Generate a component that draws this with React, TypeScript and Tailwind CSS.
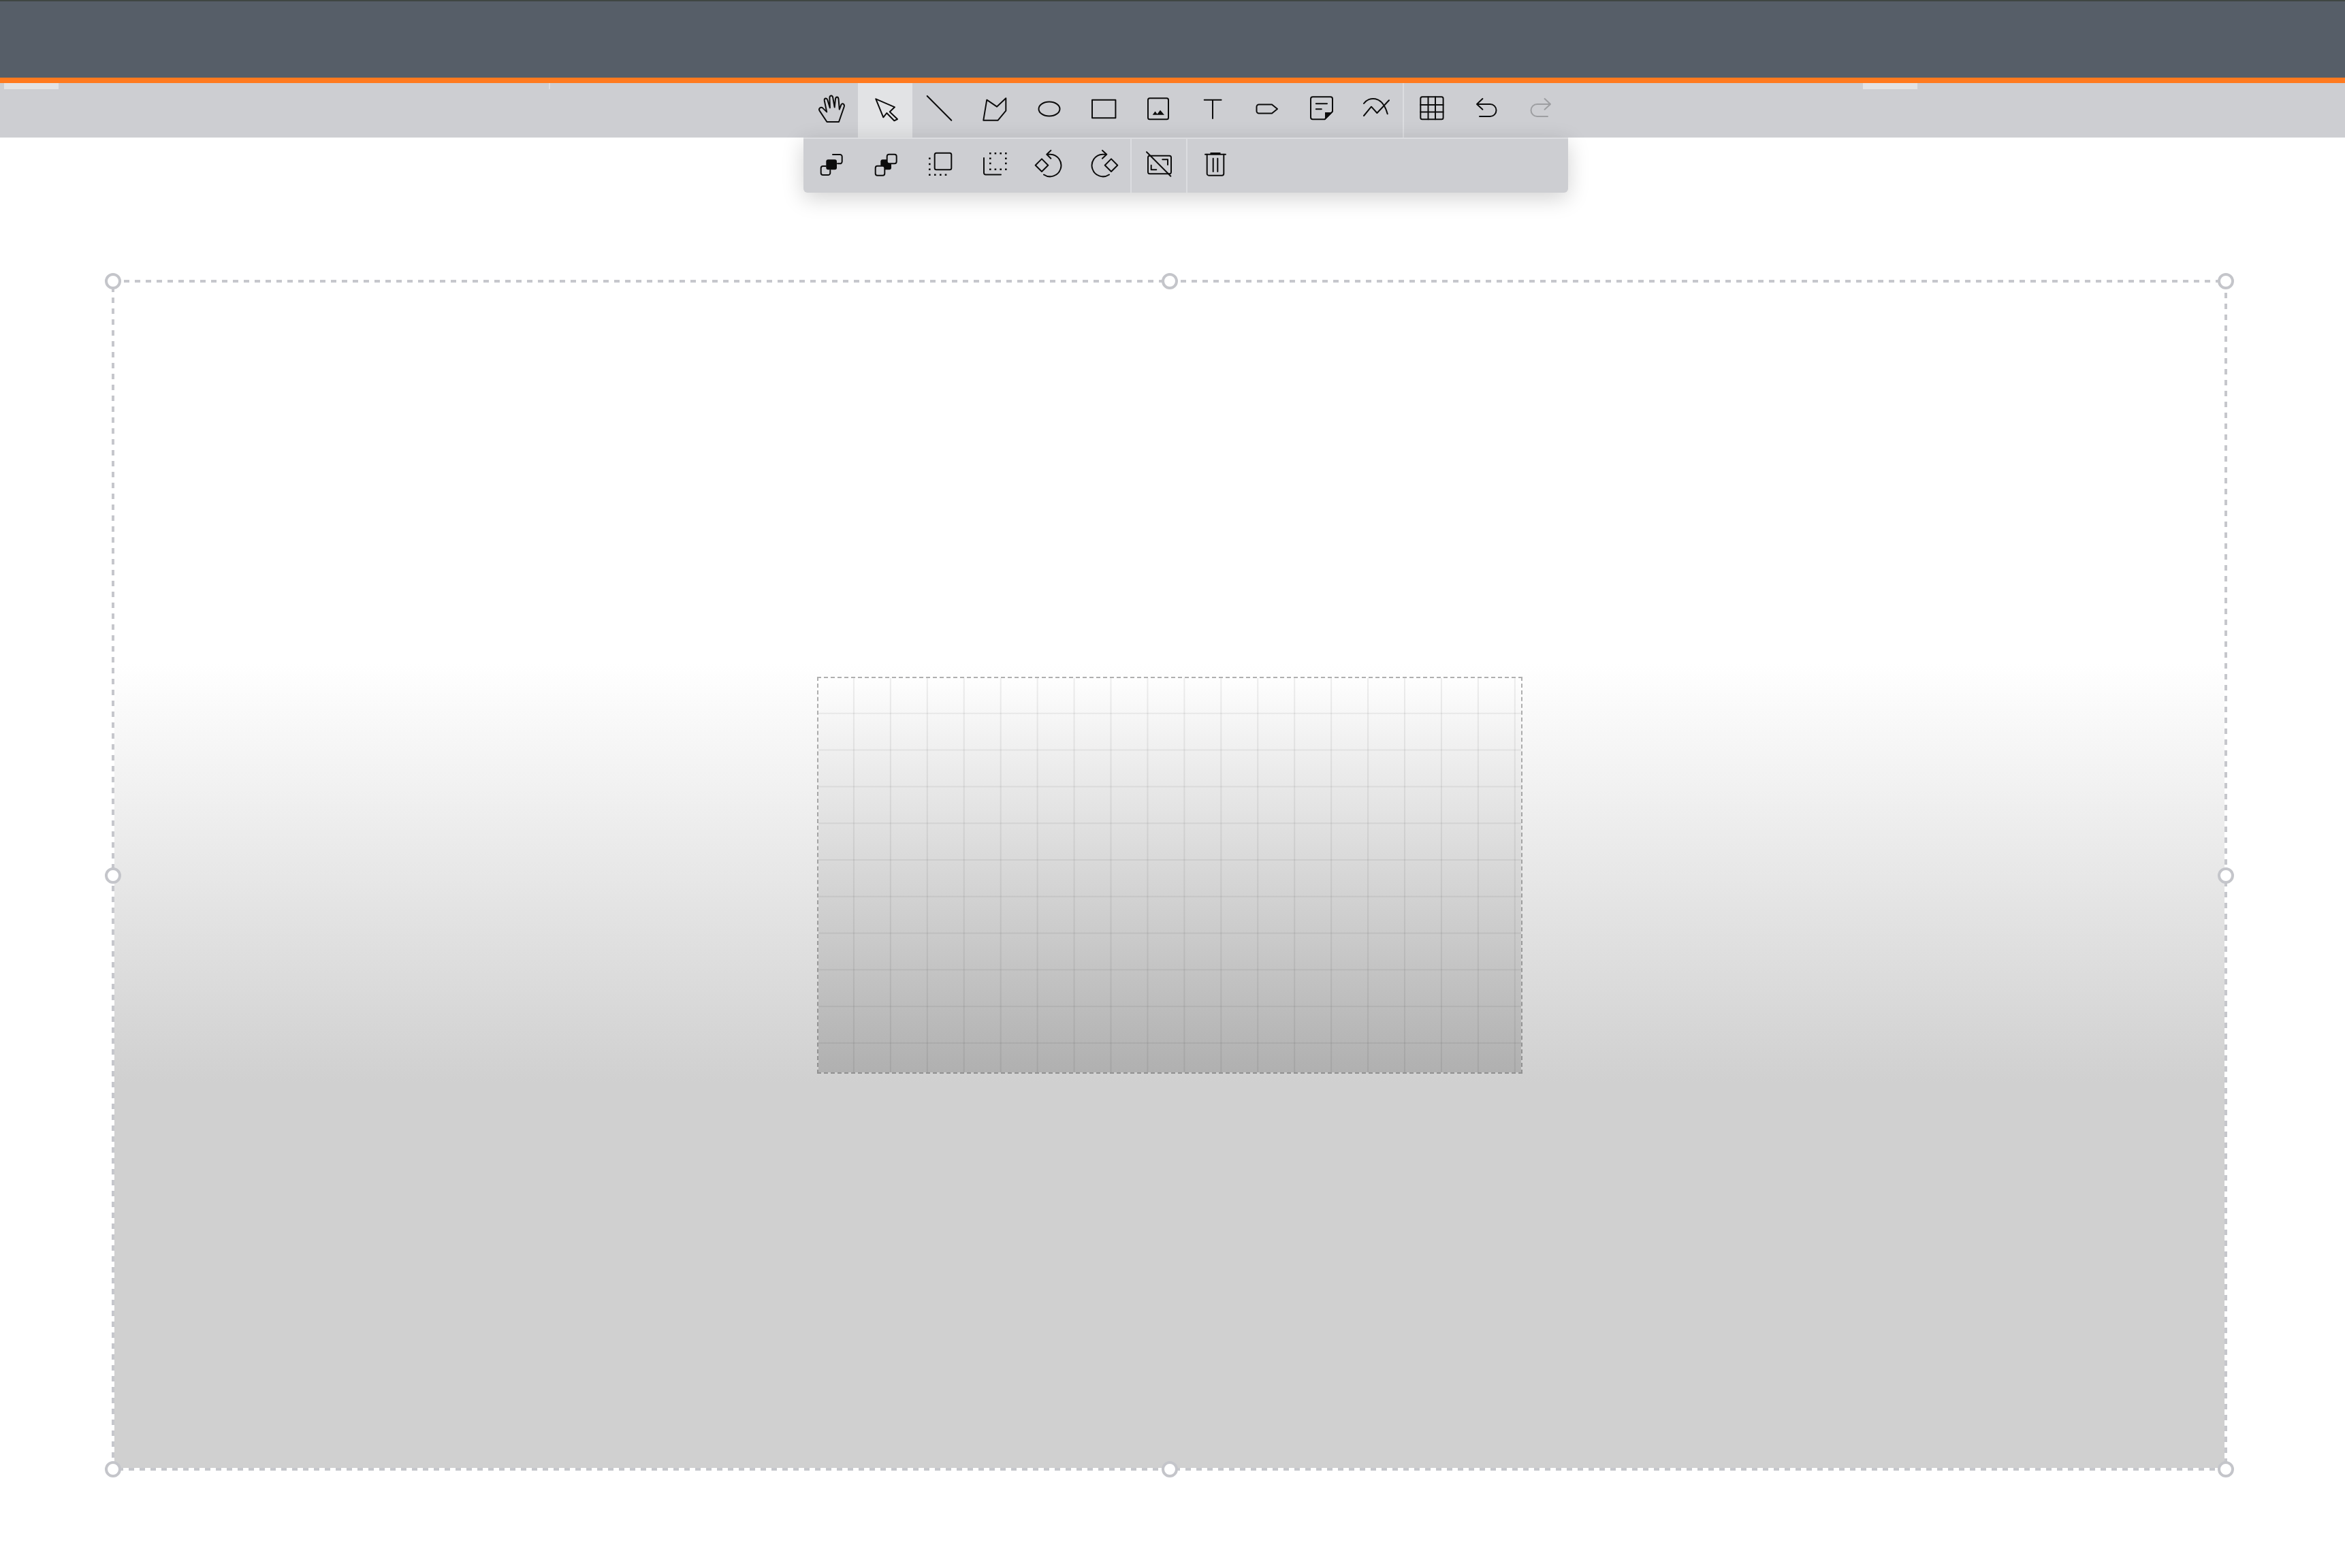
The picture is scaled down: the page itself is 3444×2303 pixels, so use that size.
import React from "react";

const BG = "#cdced2";

function Ico({ children, className = "text-[#0c0c0c]" }: { children: React.ReactNode; className?: string }) {
  return (
    <svg
      viewBox="0 0 80 80"
      width={80}
      height={80}
      fill="none"
      stroke="currentColor"
      strokeWidth={2}
      strokeLinecap="round"
      strokeLinejoin="round"
      className={className}
    >
      {children}
    </svg>
  );
}

const Cell = ({ active, children }: { active?: boolean; children: React.ReactNode }) => (
  <div className={active ? "w-20 h-20 shrink-0 bg-[#e2e3e5]" : "w-20 h-20 shrink-0"}>{children}</div>
);

const Sep = () => <div className="w-[2px] self-stretch shrink-0 bg-[#dcdde0]" />;

function Hand() {
  return (
    <Ico>
      <path
        strokeLinejoin="round"
        d="M34.5 57H52L59.8 34.5C60.6 31 57 28.6 55.4 31.8L52.8 38.6L51.6 24C51.2 19.4 47.4 19.4 46.9 24L45.7 35.6L43.2 21.2C42.4 17.2 38.4 17.8 38.4 21.8L38.9 36.4L35.4 25C34 21 30.2 22.2 30.8 26L34.2 42.4L28.2 36.6C25.6 34.4 21.6 37.4 23.6 40.6Z"
      />
    </Ico>
  );
}

const Pointer = () => (
  <Ico>
    <path d="M26.3 23.3L54 35.3L46.7 42.3L58 53L53.3 55.3L42.3 44L37.3 50.3Z" />
  </Ico>
);
const Line = () => (
  <Ico>
    <path d="M21.7 19L57.3 54.7" />
  </Ico>
);
const Poly = () => (
  <Ico>
    <path d="M24.3 54.7L29.3 24.7L44 34.7L57.3 22.3V40.7L45.7 54.7Z" />
  </Ico>
);
const Ell = () => (
  <Ico>
    <ellipse cx="41" cy="38" rx="15.5" ry="10.5" />
  </Ico>
);
const Rect = () => (
  <Ico>
    <rect x="24" y="24.7" width="34.4" height="26.6" />
  </Ico>
);
const Img = () => (
  <Ico>
    <rect x="26" y="22.3" width="30" height="31" rx="2.5" />
    <path fill="currentColor" stroke="none" d="M32.7 46.7L36.5 41.5L39.6 45.6L44 39.7L50 46.7Z" />
  </Ico>
);
const TextT = () => (
  <Ico>
    <path d="M28.7 24.7H53.6M41 24.7V52" />
  </Ico>
);
const Label = () => (
  <Ico>
    <path d="M29 31.5H48L56 38L48 44.5H29A3.5 3.5 0 0 1 25.5 41V35A3.5 3.5 0 0 1 29 31.5Z" />
  </Ico>
);
const Note = () => (
  <Ico>
    <path d="M45.5 53.3H28A3 3 0 0 1 25 50.3V23.3A3 3 0 0 1 28 20.3H54A3 3 0 0 1 57 23.3V41.8L45.5 53.3" />
    <path fill="currentColor" stroke="none" d="M46 43H57L46 54Z" />
    <path d="M32.8 30.3H49M32.8 38.3H40.8" />
  </Ico>
);
const Curve = () => (
  <Ico>
    <path d="M23 48L34 34.7L42.4 44L60 25.3" />
    <path d="M23 30C30 20 50 17 57.7 45.3" />
  </Ico>
);
const Table = () => (
  <Ico>
    <rect x="24.3" y="20.3" width="33.3" height="33" rx="2.5" />
    <path d="M35.5 20.3V53.3M46 20.3V53.3M24.3 32H57.6M24.3 42.5H57.6" />
  </Ico>
);
const Undo = () => (
  <Ico>
    <path d="M27 31H46.5A9 9 0 0 1 46.5 49H31M35.4 23L27 31L35.4 38.7" />
  </Ico>
);
const Redo = () => (
  <Ico className="text-[#9d9ea1]">
    <path d="M55 31H35.5A9 9 0 0 0 35.5 49H51M46.6 23L55 31L46.6 38.7" />
  </Ico>
);

const Front = () => (
  <Ico>
    <path d="M43 25H53.7A3 3 0 0 1 56.7 28V35.3A3 3 0 0 1 53.7 38.3H50" />
    <path d="M33 42H28.7A3 3 0 0 0 25.7 45V52A3 3 0 0 0 28.7 55H36.3A3 3 0 0 0 39.3 52V48" />
    <rect x="33.3" y="32.3" width="15.7" height="15" rx="3" fill="currentColor" stroke="none" />
  </Ico>
);
const Back = () => (
  <Ico>
    <rect x="33.3" y="32.3" width="15.7" height="15" rx="3" fill="currentColor" stroke="none" />
    <rect x="42.7" y="24.7" width="14" height="13.6" rx="3" fill={BG} />
    <rect x="25.7" y="41.7" width="13.6" height="14" rx="3" fill={BG} />
  </Ico>
);
const Forward = () => (
  <Ico>
    <rect x="32.7" y="22.7" width="24.6" height="24.6" rx="2.5" />
    <path
      strokeWidth={2.6}
      strokeLinecap="butt"
      d="M24 30.7H26.6M24 39H26.6M24 46.7H26.6M24 54.7H26.6M32 54.7H34.6M40 54.7H42.6M47.7 54.7H50.3"
    />
  </Ico>
);
const Backward = () => (
  <Ico>
    <path d="M25 30V52A2.5 2.5 0 0 0 27.5 54.5H50" />
    <path
      strokeWidth={2.6}
      strokeLinecap="butt"
      d="M33 23.3H35.6M40.6 23.3H43.2M48.4 23.3H51M56 23.3H58.6M33 30.7H35.6M33 38H35.6M33 46.7H35.6M56 30.7H58.6M56 38H58.6M56 46.7H58.6M40.6 46.7H43.2M48.4 46.7H51"
    />
  </Ico>
);
const RotL = () => (
  <Ico>
    <path d="M30 31.4L39.3 40.7L30 50L20.7 40.7Z" />
    <path d="M38 24.7H42.7A16.3 16.3 0 1 1 33 54.5M43.3 19L37.3 24.7L43.3 30.7" />
  </Ico>
);
const RotR = () => (
  <Ico>
    <path d="M52 31.4L61.3 40.7L52 50L42.7 40.7Z" />
    <path d="M44.6 24.7H39.3A16.3 16.3 0 1 0 49 54.5M39 19L45.3 24.7L39 30.7" />
  </Ico>
);
const NoAspect = () => (
  <Ico>
    <rect x="24" y="26.7" width="34" height="26.6" rx="2.5" />
    <path d="M22 21.3L57.3 56.7" />
    <path d="M45.3 32.3H53V40M28.7 40.7V47.3H36.3" />
  </Ico>
);
const Trash = () => (
  <Ico>
    <path d="M26 24.7H56M34.3 23H47.7" />
    <path d="M28.7 24.7V53A2.7 2.7 0 0 0 31.4 55.7H50.6A2.7 2.7 0 0 0 53.3 53V24.7" />
    <path d="M37.7 30.7V50M44.3 30.7V50" />
  </Ico>
);

function Handle({ className }: { className: string }) {
  return <div className={"absolute w-6 h-6 rounded-full border-4 border-[#c4c5ca] bg-white " + className} />;
}

export default function App() {
  return (
    <div className="w-[3444px] h-[2303px] overflow-hidden bg-white flex flex-col">
      <header className="h-[122px] shrink-0 bg-[#565e68] border-t-2 border-t-[#3f4643] border-b-[8px] border-b-[#ff7a1f]" />

      <div className="relative z-10 h-20 shrink-0 bg-[#cdced2] flex pl-[1180px]">
        <div className="absolute left-[6px] top-0 w-20 h-[9px] bg-[#e2e3e5]" />
        <div className="absolute left-[806px] top-0 w-[2px] h-[9px] bg-[#dcdde0]" />
        <div className="absolute left-[2736px] top-0 w-20 h-[9px] bg-[#e2e3e5]" />
        <Cell><Hand /></Cell>
        <Cell active><Pointer /></Cell>
        <Cell><Line /></Cell>
        <Cell><Poly /></Cell>
        <Cell><Ell /></Cell>
        <Cell><Rect /></Cell>
        <Cell><Img /></Cell>
        <Cell><TextT /></Cell>
        <Cell><Label /></Cell>
        <Cell><Note /></Cell>
        <Cell><Curve /></Cell>
        <Sep />
        <Cell><Table /></Cell>
        <Cell><Undo /></Cell>
        <Cell><Redo /></Cell>

        <div className="absolute left-[1180px] top-full w-[1123px] h-[81px] bg-[#cdced2] border-t-2 border-t-[#dcdde0] rounded-b-[6px] shadow-[0_8px_32px_rgba(0,0,0,0.18)] flex">
          <div className="flex -mt-[2px]">
            <Cell><Front /></Cell>
            <Cell><Back /></Cell>
            <Cell><Forward /></Cell>
            <Cell><Backward /></Cell>
            <Cell><RotL /></Cell>
            <Cell><RotR /></Cell>
            <Sep />
            <Cell><NoAspect /></Cell>
            <Sep />
            <Cell><Trash /></Cell>
          </div>
        </div>
      </div>

      <main className="flex-1">
        <div className="relative ml-[164px] mt-[209px] w-[3107px] h-[1749px] border-4 border-transparent bg-clip-padding bg-[linear-gradient(to_bottom,#ffffff_0px,#ffffff_560px,#d0d0d0_1175px,#d0d0d0_100%)] flex items-center justify-center">
          <svg width={3107} height={1749} fill="none" className="absolute -left-1 -top-1 pointer-events-none">
            <rect x={2} y={2} width={3103} height={1745} stroke="#c6c7cc" strokeWidth={4} strokeDasharray="8 8" />
          </svg>
          <Handle className="-left-[14px] -top-[14px]" />
          <Handle className="left-1/2 -translate-x-1/2 -top-[14px]" />
          <Handle className="-right-[14px] -top-[14px]" />
          <Handle className="-left-[14px] top-1/2 -translate-y-1/2" />
          <Handle className="-right-[14px] top-1/2 -translate-y-1/2" />
          <Handle className="-left-[14px] -bottom-[14px]" />
          <Handle className="left-1/2 -translate-x-1/2 -bottom-[14px]" />
          <Handle className="-right-[14px] -bottom-[14px]" />

          <div className="w-[1036px] h-[583px] border-2 border-dashed border-black/30 bg-clip-padding bg-gradient-to-b from-[#fefefe] to-[#b0b0b0]">
            <div className="w-full h-full bg-[linear-gradient(to_right,transparent_51px,rgba(0,0,0,0.065)_51px,rgba(0,0,0,0.065)_53px,transparent_53px),linear-gradient(to_bottom,transparent_51px,rgba(0,0,0,0.06)_51px,rgba(0,0,0,0.06)_53px,transparent_53px)] bg-[length:53.94px_53.8px]" />
          </div>
        </div>
      </main>
    </div>
  );
}
